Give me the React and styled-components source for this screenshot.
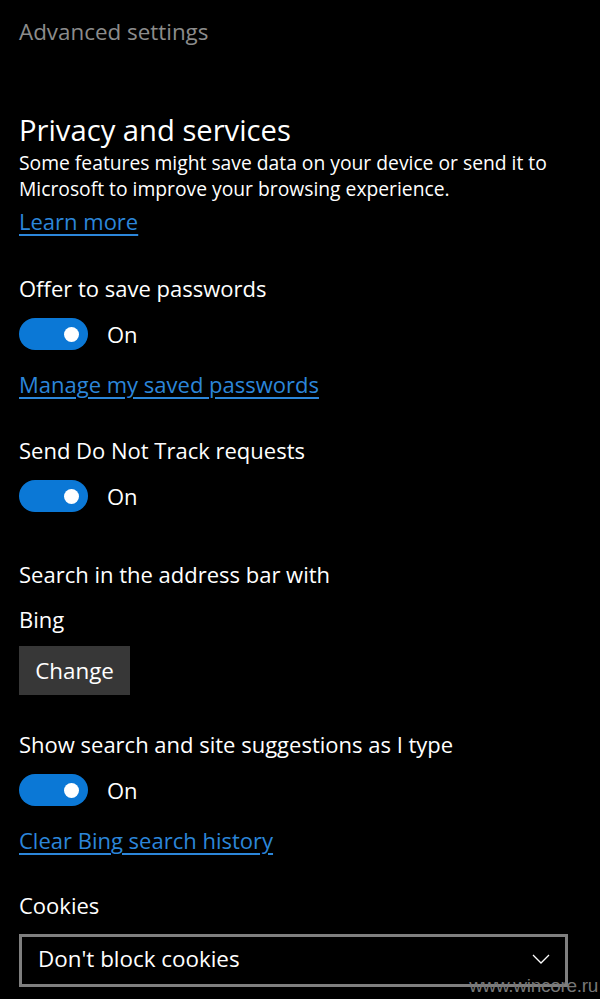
import React from "react";
import styled, { createGlobalStyle } from "styled-components";

const Global = createGlobalStyle`
  html, body { margin: 0; padding: 0; background: #000; }
  body { font-family: "Open Sans", "Noto Sans", sans-serif; color: #fff; }
`;

const Page = styled.div`
  width: 600px;
  height: 999px;
  box-sizing: border-box;
  padding: 17px 32px 0 19px;
  background: #000;
  position: relative;
  overflow: hidden;
`;

const PageTitle = styled.div`
  font-size: 22.4px;
  line-height: 30px;
  color: #8c8c8c;
`;

const Heading = styled.div`
  margin-top: 65px;
  font-size: 29.2px;
  line-height: 36px;
  color: #fff;
`;

const Description = styled.div`
  margin-top: 2px;
  font-size: 19.3px;
  line-height: 26px;
  color: #fff;
`;

const Text = styled.div`
  font-size: 22px;
  line-height: 26px;
  color: #fff;
  margin-top: ${(p) => p.$mt || 0}px;
  white-space: nowrap;
`;

const Link = styled.a`
  display: block;
  font-size: 22px;
  line-height: 26px;
  color: #2c86da;
  text-decoration: underline;
  text-underline-offset: 4px;
  text-decoration-thickness: 1.5px;
  margin-top: ${(p) => p.$mt || 0}px;
  width: max-content;
`;

const ToggleRow = styled.div`
  display: flex;
  align-items: center;
  gap: 19px;
  margin-top: ${(p) => p.$mt || 17}px;
`;

const Track = styled.div`
  width: 69px;
  height: 32px;
  border-radius: 16px;
  background: #0b78d6;
  position: relative;
  flex: none;
`;

const Knob = styled.div`
  position: absolute;
  width: 15px;
  height: 15px;
  border-radius: 50%;
  background: #fff;
  top: 8.5px;
  right: 9px;
`;

const ToggleLabel = styled.span`
  font-size: 22px;
  line-height: 26px;
`;

const Button = styled.div`
  margin-top: 14px;
  width: 111px;
  height: 49px;
  background: #373737;
  display: flex;
  align-items: center;
  justify-content: center;
  font-size: 22.4px;
`;

const Select = styled.div`
  margin-top: 16px;
  width: 549px;
  height: 53px;
  box-sizing: border-box;
  border: 3px solid #7f7f7f;
  display: flex;
  align-items: center;
  justify-content: space-between;
  padding: 0 15px 4px 16px;
  font-size: 22.4px;
`;

const Watermark = styled.div`
  position: absolute;
  right: 2px;
  bottom: 2px;
  font-family: "Liberation Sans", sans-serif;
  font-size: 19px;
  color: #777;
  letter-spacing: -0.3px;
`;

const Toggle = ({ mt }) => (
  <ToggleRow $mt={mt}>
    <Track>
      <Knob />
    </Track>
    <ToggleLabel>On</ToggleLabel>
  </ToggleRow>
);

export default function App() {
  return (
    <>
      <Global />
      <Page>
        <PageTitle>Advanced settings</PageTitle>
        <Heading>Privacy and services</Heading>
        <Description>
          Some features might save data on your device or send it to
          <br />
          Microsoft to improve your browsing experience.
        </Description>
        <Link $mt={6}>Learn more</Link>

        <Text $mt={41}>Offer to save passwords</Text>
        <Toggle />
        <Link $mt={21}>Manage my saved passwords</Link>

        <Text $mt={40}>Send Do Not Track requests</Text>
        <Toggle />

        <Text $mt={49}>Search in the address bar with</Text>
        <Text $mt={19}>Bing</Text>
        <Button>Change</Button>

        <Text $mt={36}>Show search and site suggestions as I type</Text>
        <Toggle />
        <Link $mt={21}>Clear Bing search history</Link>

        <Text $mt={39}>Cookies</Text>
        <Select>
          <span>Don't block cookies</span>
          <svg width="18" height="10" viewBox="0 0 18 10">
            <path d="M1 1 L9 9 L17 1" fill="none" stroke="#fff" strokeWidth="1.3" />
          </svg>
        </Select>
        <Watermark>www.wincore.ru</Watermark>
      </Page>
    </>
  );
}
